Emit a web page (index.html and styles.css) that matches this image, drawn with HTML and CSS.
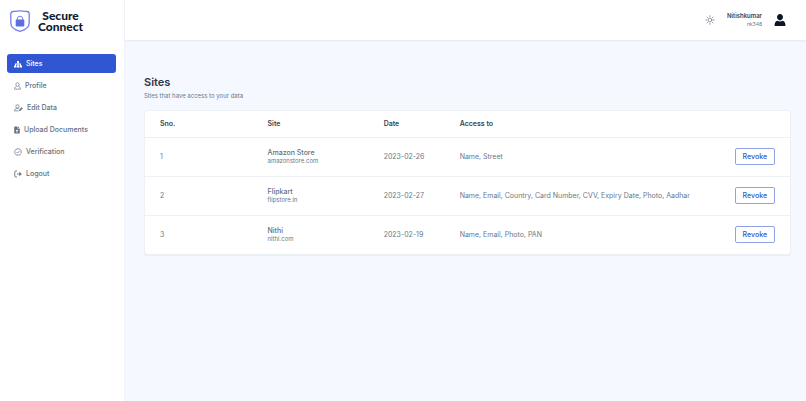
FILE: index.html
```html
<!DOCTYPE html>
<html lang="en">
<head>
<meta charset="utf-8">
<meta name="viewport" content="width=device-width, initial-scale=1">
<title>Secure Connect</title>
<link rel="stylesheet" href="styles.css">
</head>
<body>
<div class="app">
  <aside class="sidebar">
    <a class="brand" href="#">
      <svg class="brand-mark" viewBox="0 0 20 22" aria-hidden="true">
        <path d="M3 1.500C6 1.500 8 .8 10 .8S14 1.500 17 1.500Q19.200 1.500 19.200 4V13C19.200 18 15 20 10 21.300C5 20 .8 18 .8 13V4Q.8 1.500 3 1.500z" fill="#fff" stroke="#7381ec" stroke-width="1.300"/>
        <path d="M7.200 10.500V9a2.800 2.800 0 0 1 5.600 0v1.500" fill="none" stroke="#7381ec" stroke-width="1"/>
        <rect x="5.700" y="9.600" width="8.600" height="6.800" rx="1" fill="#5c6ee2"/>
      </svg>
      <span class="brand-name"><span>Secure</span><span>Connect</span></span>
    </a>
    <nav class="menu">
      <a class="item active" href="#">
        <svg width="8" height="8" viewBox="0 0 16 16" aria-hidden="true"><path fill="currentColor" d="M6 2h4v4H9v1h5v4h2v4h-5v-4h1V9H9v2h1v4H6v-4h1V9H4v2h1v4H0v-4h2V7h5V6H6z"/></svg>
        Sites
      </a>
      <a class="item" href="#">
        <svg width="7" height="8" viewBox="0 0 14 16" fill="none" stroke="currentColor" stroke-width="1.400" aria-hidden="true"><path d="M7 1.500c2 0 3.200 1.500 3.200 3.400S9 9 7 9 3.800 6.800 3.800 4.900 5 1.500 7 1.500zM4.500 9.200C2 10 1 11.500 1 14.300h12c0-2.800-1-4.300-3.500-5.100"/></svg>
        Profile
      </a>
      <a class="item" href="#">
        <svg width="9" height="8" viewBox="0 0 18 16" fill="none" stroke="currentColor" stroke-width="1.400" aria-hidden="true"><circle cx="7" cy="4.800" r="3.300"/><path d="M9 13.800H1c0-3 1.500-4.600 4-4.600h4.500"/><path d="M10.500 13.500l.5-2 4.500-4.300 1.500 1.500-4.500 4.300z" fill="currentColor"/></svg>
        Edit Data
      </a>
      <a class="item" href="#">
        <svg width="6" height="8" viewBox="0 0 12 16" aria-hidden="true"><path fill="currentColor" fill-rule="evenodd" d="M1.500 1H7v4.500h4.500V15H.5V2zM8 1l3.500 3.500H8zM6 7L3 10h2v3h2v-3h2z"/></svg>
        Upload Documents
      </a>
      <a class="item" href="#">
        <svg width="8" height="8" viewBox="0 0 16 16" fill="none" stroke="currentColor" stroke-width="1.400" aria-hidden="true"><path d="M8 1.200l1.900.9 2.100.1 1 1.900 1.500 1.500-.3 2.400.3 2.300-1.700 1.600-1 1.900-2 .1-1.800.9-1.900-.9-2.100-.1-1-1.900-1.500-1.600.3-2.300-.3-2.400L3 4.100l1-1.900 2.100-.1zM5 8l2.200 2.200L11.200 6"/></svg>
        Verification
      </a>
      <a class="item" href="#">
        <svg width="8" height="8" viewBox="0 0 16 16" fill="none" stroke="currentColor" stroke-width="1.800" aria-hidden="true"><path d="M6 2H3.500Q1.500 2 1.500 4v8q0 2 2 2H6M6 8h6"/><path d="M11 4.500L15 8l-4 3.500z" fill="currentColor" stroke-width="1"/></svg>
        Logout
      </a>
    </nav>
  </aside>
  <div class="page">
    <header class="topbar">
      <button class="icon-button" type="button" aria-label="Toggle theme">
        <svg width="10" height="10" viewBox="0 0 20 20" fill="none" stroke="currentColor" stroke-width="1.400" stroke-linecap="round" aria-hidden="true"><circle cx="10" cy="10" r="3.800"/><path d="M10 1.500v2M10 16.500v2M1.500 10h2M16.500 10h2M4 4l1.400 1.400M14.600 14.600L16 16M4 16l1.400-1.400M14.600 5.400L16 4"/></svg>
      </button>
      <div class="user">
        <span class="user-name">Nitishkumar</span>
        <span class="user-id">nk348</span>
      </div>
      <button class="icon-button avatar" type="button" aria-label="Account">
        <svg width="12" height="12" viewBox="0 0 24 24" fill="currentColor" aria-hidden="true"><path d="M12 0c3.500 0 6 2.700 6 6.200S15.500 13 12 13 6 9.700 6 6.200 8.500 0 12 0zM1 24c0-6 2-10 6-10.500q5 3 10 0c4 .5 6 4.500 6 10.500z"/></svg>
      </button>
    </header>
    <main class="content">
      <h1>Sites</h1>
      <p class="lead">Sites that have access to your data</p>
      <div class="card">
        <table>
          <thead>
            <tr><th class="col-no">Sno.</th><th class="col-site">Site</th><th class="col-date">Date</th><th>Access to</th><th class="col-action"></th></tr>
          </thead>
          <tbody>
            <tr><td>1</td><td><span class="site">Amazon Store</span><span class="domain">amazonstore.com</span></td><td>2023-02-26</td><td>Name, Street</td><td class="action"><button class="revoke" type="button">Revoke</button></td></tr>
            <tr><td>2</td><td><span class="site">Flipkart</span><span class="domain">flipstore.in</span></td><td>2023-02-27</td><td>Name, Email, Country, Card Number, CVV, Expiry Date, Photo, Aadhar</td><td class="action"><button class="revoke" type="button">Revoke</button></td></tr>
            <tr><td>3</td><td><span class="site">Nithi</span><span class="domain">nithi.com</span></td><td>2023-02-19</td><td>Name, Email, Photo, PAN</td><td class="action"><button class="revoke" type="button">Revoke</button></td></tr>
          </tbody>
        </table>
      </div>
    </main>
  </div>
</div>
</body>
</html>
```
FILE: styles.css
```css
* { box-sizing: border-box; }

body {
  margin: 0;
  background: #f5f9ff;
  color: #6b7785;
  font: 7px/10px Inter, "Liberation Sans", sans-serif;
}

a { color: inherit; text-decoration: none; }
button { font: inherit; cursor: pointer; }
svg { display: block; flex: none; }

.app { display: flex; min-height: 100vh; }

.sidebar {
  flex: 0 0 125px;
  background: #fff;
  border-right: 1px solid #f0f4f8;
}

.brand {
  display: flex;
  align-items: center;
  gap: 8px;
  padding: 10px 10px 0;
  color: #0f1b2e;
}
.brand-mark { width: 20px; height: 22px; }
.brand-name {
  display: flex;
  flex-direction: column;
  font: 900 12px/11px Lato, Inter, sans-serif;
  text-align: center;
}

.menu {
  display: flex;
  flex-direction: column;
  gap: 3px;
  padding: 22px 8px 0 7px;
}
.item {
  display: flex;
  align-items: center;
  gap: 4px;
  height: 19px;
  padding: 0 7px;
  border-radius: 3px;
  font-weight: 500;
  color: #64707e;
}
.active { background: #3056d3; color: #fff; }

.page { flex: 1; min-width: 0; }

.topbar {
  display: flex;
  align-items: center;
  justify-content: flex-end;
  gap: 12px;
  height: 40px;
  padding: 0 20px;
  background: #fff;
  box-shadow: 0 1px 2px #e2e8f0;
}
.icon-button {
  padding: 0;
  border: 0;
  background: none;
  color: #64707e;
}
.avatar { color: #0b1728; }
.user { display: flex; flex-direction: column; text-align: right; line-height: 8px; }
.user-name { font-size: 6px; font-weight: 600; color: #3a4554; }
.user-id { font-size: 5px; }

.content { padding: 35px 15px 20px 19px; }
h1 {
  margin: 0;
  font-size: 11px;
  line-height: 14px;
  font-weight: 600;
  color: #2b3544;
}
.lead { margin: 2px 0 9px; font-size: 6px; }

.card {
  background: #fff;
  border: 1px solid #edf1f6;
  border-radius: 3px;
  box-shadow: 0 1px 1px #e8edf3;
  overflow: hidden;
}
table { width: 100%; border-collapse: collapse; }
th, td { padding: 0; text-align: left; }
th:first-child, td:first-child { padding-left: 15px; }
th:last-child, td:last-child { padding-right: 15px; }
th { height: 26px; font-weight: 600; color: #3a4554; }
td { height: 39px; border-top: 1px solid #edf1f6; }
.col-no { width: 19%; }
.col-site { width: 18%; }
.col-date { width: 76px; }
.col-action { width: 60px; }
.site { display: block; line-height: 9px; font-weight: 500; color: #64707e; }
.domain { display: block; font-size: 6px; line-height: 8px; }
.action { text-align: right; }
.revoke {
  height: 17px;
  padding: 0 7px;
  border: 1px solid #8fa3e6;
  border-radius: 2px;
  background: #fff;
  color: #3056d3;
  font-weight: 500;
}
```
